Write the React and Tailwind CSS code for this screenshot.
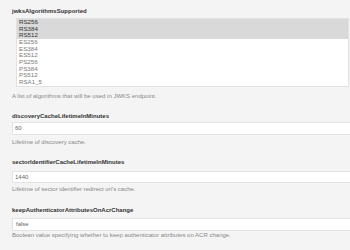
export default function App() {
  const selected = ["RS256", "RS384", "RS512"];
  const rest = ["ES256", "ES384", "ES512", "PS256", "PS384", "PS512", "RSA1_5"];
  return (
    <div className="w-[350px] h-[250px] overflow-hidden bg-[#f4f4f4] font-['Liberation_Sans',Arial,sans-serif] pl-[12px] pt-[8px]">
      <div className="text-[6px] leading-[7px] font-bold text-[#333]">jwksAlgorithmsSupported</div>
      <div className="mt-[3px] ml-[4px] mr-[1px] border border-[#e2e2e2] bg-white">
        <div className="bg-[#d9d9d9]">
          {selected.map((o) => (
            <div key={o} className="h-[6.67px] leading-[6.67px] text-[6.2px] pl-[2px] text-[#333]">
              {o}
            </div>
          ))}
        </div>
        {rest.map((o) => (
          <div key={o} className="h-[6.67px] leading-[6.67px] text-[6.2px] pl-[2px] text-[#7a7a7a]">
            {o}
          </div>
        ))}
      </div>
      <div className="mt-[6px] text-[6px] leading-[7px] text-[#888]">A list of algorithms that will be used in JWKS endpoint.</div>

      <div className="mt-[13px] text-[6px] leading-[7px] font-bold text-[#333]">discoveryCacheLifetimeInMinutes</div>
      <div className="mt-[2.5px] h-[13px] border-y border-l border-[#e2e2e2] bg-white pl-[2px] text-[6px] leading-[11px] text-[#666]">60</div>
      <div className="mt-[4px] text-[6px] leading-[7px] text-[#888]">Lifetime of discovery cache.</div>

      <div className="mt-[12.5px] text-[6px] leading-[7px] font-bold text-[#333]">sectorIdentifierCacheLifetimeInMinutes</div>
      <div className="mt-[5px] h-[12px] border-y border-l border-[#e2e2e2] bg-white pl-[2px] text-[6px] leading-[10px] text-[#666]">1440</div>
      <div className="mt-[3.5px] text-[6px] leading-[7px] text-[#888]">Lifetime of sector identifier redirect uri's cache.</div>

      <div className="mt-[14px] text-[6px] leading-[7px] font-bold text-[#333]">keepAuthenticatorAttributesOnAcrChange</div>
      <div className="mt-[3.5px] h-[13px] border-y border-l border-[#e2e2e2] bg-white pl-[3px] text-[6px] leading-[11px] text-[#666]">false</div>
      <div className="mt-[1.5px] text-[6px] leading-[7px] text-[#888]">Boolean value specifying whether to keep authenticator attributes on ACR change.</div>
    </div>
  );
}
